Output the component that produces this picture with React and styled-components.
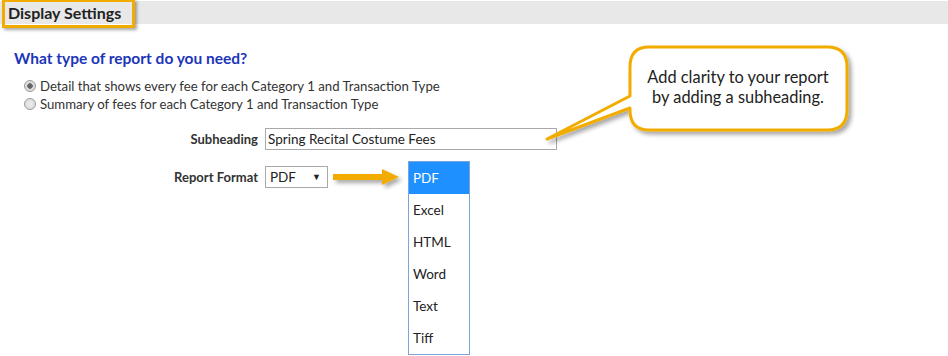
import React from 'react';
import styled, { createGlobalStyle } from 'styled-components';

const Global = createGlobalStyle`
  html, body { margin: 0; padding: 0; background: #fff; }
  body { font-family: Lato, "Open Sans", sans-serif; color: #333; }
`;

const Page = styled.div`
  position: relative;
  width: 948px;
  height: 356px;
  overflow: hidden;
`;

const Bar = styled.div`
  margin-top: 1px;
  height: 23px;
  background: #e8e8e8;
  display: flex;
  align-items: center;
  padding-left: 8px;
`;

const Title = styled.div`
  font-size: 16px;
  font-weight: 700;
  color: #222;
`;

const Highlight = styled.div`
  position: absolute;
  left: 2px;
  top: -1px;
  width: 127px;
  height: 23px;
  border: 3px solid #f2ac00;
  box-shadow: 2px 2px 3px rgba(0, 0, 0, 0.35);
`;

const Body = styled.div`
  padding: 25px 0 0 14px;
`;

const Question = styled.h2`
  margin: 0 0 11px;
  font-size: 15.5px;
  font-weight: 700;
  color: #1c36b8;
`;

const Options = styled.div`
  padding-left: 10px;
  display: flex;
  flex-direction: column;
  gap: 2px;
`;

const Option = styled.label`
  display: flex;
  align-items: center;
  gap: 4px;
  font-size: 13.2px;
  line-height: 16px;
  color: #333;
`;

const Radio = styled.span`
  width: 10px;
  height: 10px;
  border-radius: 50%;
  border: 1px solid #9a9a9a;
  background: radial-gradient(circle, ${p => (p.checked ? '#666 0 2.5px, #ddd 3px' : '#eee 0, #ddd 5px')});
  flex: none;
`;

const Form = styled.div`
  margin-top: 16px;
  display: flex;
  flex-direction: column;
  gap: 16px;
`;

const Row = styled.div`
  display: flex;
  align-items: center;
  gap: 7px;
`;

const Label = styled.div`
  width: 244px;
  text-align: right;
  font-size: 13px;
  font-weight: 700;
  color: #333;
`;

const TextInput = styled.div`
  width: 288px;
  height: 20px;
  border: 1px solid #a9a9a9;
  font-size: 13.5px;
  line-height: 20px;
  padding-left: 2px;
  color: #222;
`;

const Select = styled.div`
  width: 51px;
  height: 20px;
  border: 1px solid #a9a9a9;
  font-size: 13.5px;
  line-height: 20px;
  padding: 0 6px 0 4px;
  display: flex;
  justify-content: space-between;
  color: #222;
`;

const Caret = styled.span`
  font-size: 9px;
`;

const Menu = styled.ul`
  position: absolute;
  left: 408px;
  top: 161px;
  width: 60px;
  margin: 0;
  padding: 0;
  list-style: none;
  border: 1px solid #7ba3dc;
  background: #fff;
`;

const Item = styled.li`
  height: 32px;
  line-height: 32px;
  padding-left: 4px;
  font-size: 13.5px;
  color: ${p => (p.active ? '#fff' : '#222')};
  background: ${p => (p.active ? '#1e90ff' : 'transparent')};
`;

const Overlay = styled.svg`
  position: absolute;
  left: 0;
  top: 0;
  pointer-events: none;
`;

const Callout = styled.div`
  position: absolute;
  left: 629px;
  top: 45px;
  width: 218px;
  height: 84px;
  display: flex;
  align-items: center;
  justify-content: center;
  text-align: center;
  font-size: 16.4px;
  line-height: 20px;
  color: #222;
`;

const formats = ['PDF', 'Excel', 'HTML', 'Word', 'Text', 'Tiff'];

export default function App() {
  return (
    <Page>
      <Global />
      <Bar>
        <Title>Display Settings</Title>
      </Bar>
      <Highlight />
      <Body>
        <Question>What type of report do you need?</Question>
        <Options>
          <Option><Radio checked />Detail that shows every fee for each Category 1 and Transaction Type</Option>
          <Option><Radio />Summary of fees for each Category 1 and Transaction Type</Option>
        </Options>
        <Form>
          <Row>
            <Label>Subheading</Label>
            <TextInput>Spring Recital Costume Fees</TextInput>
          </Row>
          <Row>
            <Label>Report Format</Label>
            <Select>PDF<Caret>▼</Caret></Select>
          </Row>
        </Form>
      </Body>
      <Menu>
        {formats.map((f, i) => (
          <Item key={f} active={i === 0}>{f}</Item>
        ))}
      </Menu>
      <Overlay width="948" height="356">
        <defs>
          <filter id="sh" x="-20%" y="-20%" width="150%" height="160%">
            <feDropShadow dx="3" dy="3" stdDeviation="2" floodColor="#000" floodOpacity="0.35" />
          </filter>
        </defs>
        <g filter="url(#sh)">
          <path
            d="M649 47 H827 Q847 47 847 67 V110 Q847 130 827 130 H649 Q630 130 630 110 V108 L547 139 L630 96 V67 Q630 47 649 47 Z"
            fill="#fff"
            stroke="#f2ac00"
            strokeWidth="3"
            strokeLinejoin="round"
          />
          <path d="M333 174 H382 V169 L399 177 L382 185 V180 H333 Z" fill="#f2ac00" />
        </g>
      </Overlay>
      <Callout>
        Add clarity to your report<br />by adding a subheading.
      </Callout>
    </Page>
  );
}
